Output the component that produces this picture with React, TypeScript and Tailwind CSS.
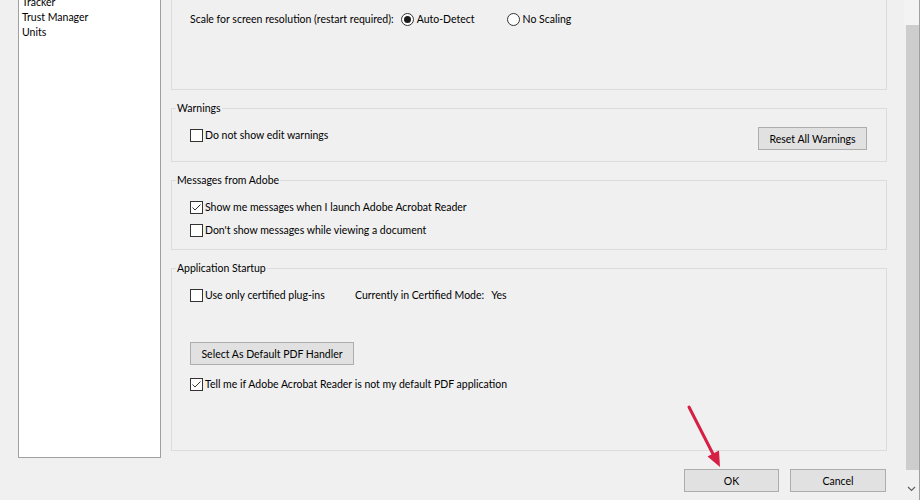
import React from "react";

function CheckBox({ checked, label }: { checked?: boolean; label: string }) {
  return (
    <div className="flex items-center gap-[2px] h-[16px]">
      <span className="w-[13px] h-[13px] border border-[#333333] bg-white flex items-center justify-center shrink-0">
        {checked && (
          <svg width="11" height="11" viewBox="0 0 11 11">
            <polyline points="1.5,5.5 4,8 9.5,2.5" fill="none" stroke="#333333" strokeWidth="1" />
          </svg>
        )}
      </span>
      <span className="whitespace-nowrap">{label}</span>
    </div>
  );
}

function Radio({ checked, label }: { checked?: boolean; label: string }) {
  return (
    <div className="flex items-center gap-[3px] h-[16px]">
      <span className="w-[13px] h-[13px] rounded-full border border-[#333333] bg-white flex items-center justify-center shrink-0">
        {checked && <span className="w-[7px] h-[7px] rounded-full bg-[#1a1a1a]" />}
      </span>
      <span className="whitespace-nowrap">{label}</span>
    </div>
  );
}

function Btn({ label, w }: { label: string; w: string }) {
  return (
    <div
      className={`${w} h-[23px] bg-[#e1e1e1] border border-[#adadad] flex items-center justify-center whitespace-nowrap`}
    >
      {label}
    </div>
  );
}

export default function App() {
  return (
    <div className="relative w-[920px] h-[500px] overflow-hidden bg-[#f0f0f0] text-black text-[10.5px] leading-[14px] font-['Lato','Liberation_Sans',sans-serif] flex">
      {/* left list */}
      <div className="pl-[18px] shrink-0">
        <div className="w-[143px] h-[458px] bg-white border-x border-b border-[#a0a0a0] overflow-hidden">
          <div className="-mt-[5px] pl-[3px] flex flex-col">
            <div className="h-[15px] leading-[15px]">Tracker</div>
            <div className="h-[15px] leading-[15px]">Trust Manager</div>
            <div className="h-[15px] leading-[15px]">Units</div>
          </div>
        </div>
      </div>

      {/* right column */}
      <div className="ml-[10px] w-[716px] shrink-0 flex flex-col">
        <div className="h-[90px] border-x border-b border-[#dcdcdc] pl-[18px] pt-[11px]">
          <div className="flex items-center h-[16px]">
            <span className="whitespace-nowrap">Scale for screen resolution (restart required):</span>
            <div className="ml-[7px]">
              <Radio checked label="Auto-Detect" />
            </div>
            <div className="ml-[32px]">
              <Radio label="No Scaling" />
            </div>
          </div>
        </div>

        <fieldset className="mt-[11px] h-[61px] border border-[#dcdcdc]">
          <legend className="ml-[4px] px-[1px]">Warnings</legend>
          <div className="mt-[12px] pl-[18px] pr-[19px] flex items-start justify-between">
            <div>
              <CheckBox label="Do not show edit warnings" />
            </div>
            <Btn label="Reset All Warnings" w="w-[109px]" />
          </div>
        </fieldset>

        <fieldset className="mt-[11px] h-[77px] border border-[#dcdcdc]">
          <legend className="ml-[4px] px-[1px]">Messages from Adobe</legend>
          <div className="mt-[12px] pl-[18px] flex flex-col gap-[7px]">
            <CheckBox checked label="Show me messages when I launch Adobe Acrobat Reader" />
            <CheckBox label="Don't show messages while viewing a document" />
          </div>
        </fieldset>

        <fieldset className="mt-[11px] h-[190px] border border-[#dcdcdc]">
          <legend className="ml-[4px] px-[1px]">Application Startup</legend>
          <div className="mt-[12px] pl-[18px] flex flex-col">
            <div className="flex items-center">
              <div className="w-[165px]">
                <CheckBox label="Use only certified plug-ins" />
              </div>
              <span className="whitespace-nowrap">Currently in Certified Mode:</span>
              <span className="ml-[7px]">Yes</span>
            </div>
            <div className="mt-[39px]">
              <Btn label="Select As Default PDF Handler" w="w-[164px]" />
            </div>
            <div className="mt-[11px]">
              <CheckBox checked label="Tell me if Adobe Acrobat Reader is not my default PDF application" />
            </div>
          </div>
        </fieldset>

        <div className="mt-[18px] flex justify-end gap-[11px] pr-[1px]">
          <Btn label="OK" w="w-[95px]" />
          <Btn label="Cancel" w="w-[96px]" />
        </div>
      </div>

      {/* scrollbar */}
      <div className="ml-[17px] w-[16px] h-[500px] border-r border-[#a0a0a0] flex flex-col shrink-0">
        <div className="h-[25px] bg-[#f3f3f3]" />
        <div className="ml-[2px] w-[13px] h-[445px] bg-[#cdcdcd]" />
        <div className="flex-1 flex items-center justify-center pt-[8px]">
          <svg width="9" height="6" viewBox="0 0 9 6">
            <polyline points="1,1 4.5,4.5 8,1" fill="none" stroke="#606060" strokeWidth="1.2" />
          </svg>
        </div>
      </div>

      {/* annotation arrow */}
      <svg className="absolute left-0 top-0 pointer-events-none" width="920" height="500" viewBox="0 0 920 500">
        <line x1="689" y1="407" x2="714" y2="456" stroke="#d61f45" strokeWidth="3" strokeLinecap="round" />
        <polygon points="720,467 707.5,456.5 719,450.5" fill="#d61f45" />
      </svg>
    </div>
  );
}
